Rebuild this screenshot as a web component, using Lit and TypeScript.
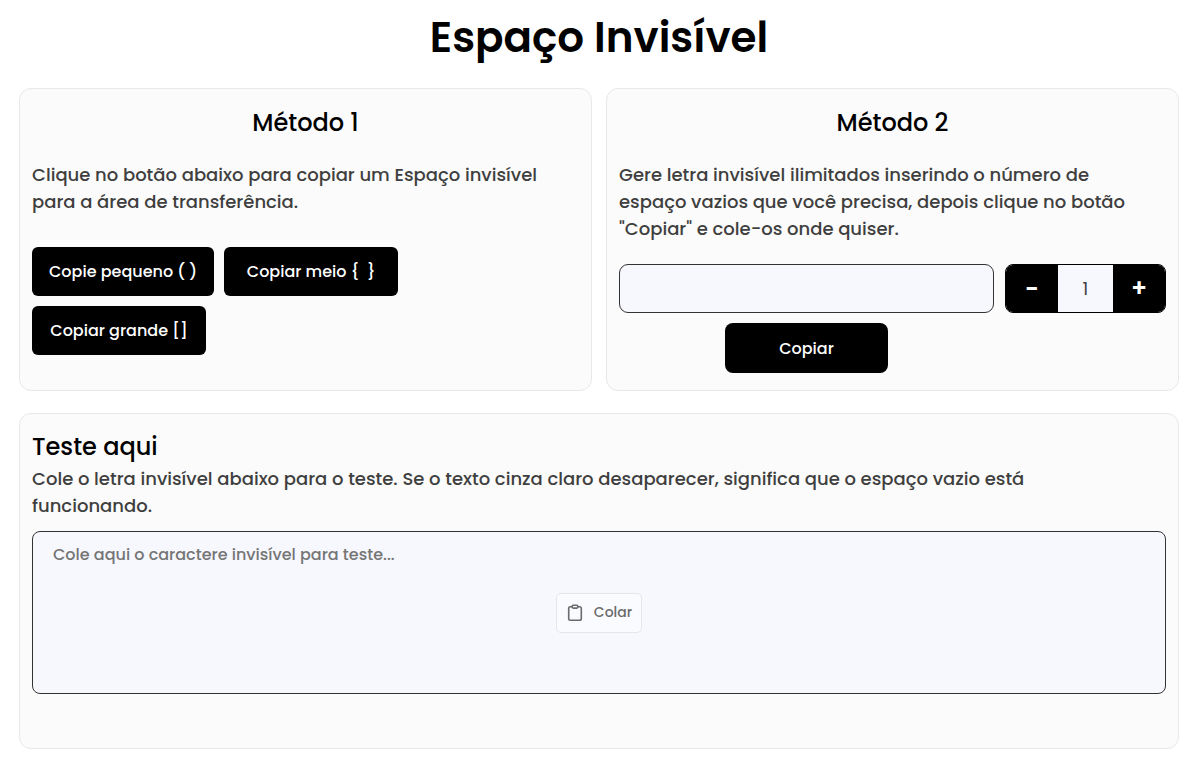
import { LitElement, html, css } from "lit";
import { customElement, state } from "lit/decorators.js";

const BLANK = "\u3164";

@customElement("app-root")
export class AppRoot extends LitElement {
  @state() private count = 1;
  @state() private output = "";

  static styles = css`
    :host {
      display: block;
      background: #fff;
      color: #3f3f3f;
      font-family: Poppins, Inter, "Noto Sans", sans-serif;
      font-weight: 500;
    }
    * {
      box-sizing: border-box;
    }
    .page {
      display: flex;
      flex-direction: column;
      padding: 8px 21px 21px 19px;
    }
    .title {
      margin: 0 0 20px;
      color: #000;
      font-size: 42px;
      line-height: 60px;
      font-weight: 600;
      text-align: center;
    }
    .methods {
      display: grid;
      grid-template-columns: 1fr 1fr;
      gap: 14px;
      margin-bottom: 22px;
    }
    .card {
      padding: 16px 12px 17px;
      border: 1px solid #e8e8e8;
      border-radius: 12px;
      background: #fbfbfb;
    }
    .heading {
      margin: 0;
      color: #000;
      font-size: 24px;
      line-height: 36px;
      font-weight: 500;
    }
    .centered {
      margin-bottom: 20px;
      text-align: center;
    }
    .text {
      margin: 0;
      padding-right: 24px;
      font-size: 18px;
      line-height: 27px;
    }
    .buttons {
      display: flex;
      flex-wrap: wrap;
      gap: 10px;
      margin-top: 32px;
    }
    button,
    input,
    textarea {
      margin: 0;
      font: inherit;
    }
    button {
      cursor: pointer;
    }
    .button {
      min-width: 174px;
      height: 49px;
      padding: 0 17px;
      border: 0;
      border-radius: 6px;
      background: #000;
      color: #fff;
      font-size: 16px;
      white-space: pre;
    }
    .generator {
      display: grid;
      grid-template-columns: 1fr 161px;
      gap: 10px 11px;
      margin-top: 22px;
    }
    .copy {
      justify-self: center;
      min-width: 163px;
      height: 50px;
      border-radius: 8px;
    }
    .field {
      width: 100%;
      height: 49px;
      padding: 0 14px;
      border: 1px solid #333;
      border-radius: 9px;
      background: #f7f8fe;
      color: #3f3f3f;
      font-size: 16px;
    }
    .stepper {
      display: flex;
      height: 49px;
      border: 1px solid #000;
      border-radius: 8px;
      overflow: hidden;
    }
    .step {
      width: 52px;
      padding: 0;
      border: 0;
      background: #000;
      color: #fff;
      font-size: 24px;
      line-height: 47px;
      font-weight: 600;
    }
    .count {
      flex: 1;
      min-width: 0;
      padding: 0;
      border: 0;
      background: #f7f8fe;
      color: #3f3f3f;
      font-size: 18px;
      font-weight: 400;
      text-align: center;
    }
    .test {
      padding: 15px 12px 54px;
    }
    .try {
      display: grid;
      margin-top: 12px;
    }
    .area {
      display: block;
      grid-area: 1 / 1;
      height: 163px;
      padding: 11px 20px;
      border-radius: 8px;
      line-height: 24px;
      resize: none;
    }
    .area::placeholder {
      color: #757575;
      opacity: 1;
    }
    .paste {
      display: flex;
      grid-area: 1 / 1;
      place-self: center;
      align-items: center;
      gap: 10px;
      height: 40px;
      padding: 0 9px;
      border: 1px solid #e6e6ea;
      border-radius: 5px;
      background: #fafbff;
      color: #6b6b6b;
      font-size: 14px;
    }
    .icon {
      display: block;
      fill: none;
      stroke: currentColor;
    }
  `;

  private copy(text: string) {
    navigator.clipboard?.writeText(text);
  }

  private step(by: number) {
    this.count = Math.max(1, this.count + by);
  }

  private generate() {
    this.output = BLANK.repeat(this.count);
    this.copy(this.output);
  }

  private async paste() {
    const area = this.renderRoot.querySelector("textarea");
    if (area) area.value = await navigator.clipboard.readText();
  }

  render() {
    return html`
      <main class="page">
        <h1 class="title">Espaço Invisível</h1>
        <div class="methods">
          <section class="card">
            <h2 class="heading centered">Método 1</h2>
            <p class="text">
              Clique no botão abaixo para copiar um Espaço invisível para a área
              de transferência.
            </p>
            <div class="buttons">
              <button class="button" @click=${() => this.copy(BLANK)}>Copie pequeno ( )</button>
              <button class="button" @click=${() => this.copy(BLANK.repeat(2))}>Copiar meio {  }</button>
              <button class="button" @click=${() => this.copy(BLANK.repeat(4))}>Copiar grande []</button>
            </div>
          </section>
          <section class="card">
            <h2 class="heading centered">Método 2</h2>
            <p class="text">
              Gere letra invisível ilimitados inserindo o número de espaço
              vazios que você precisa, depois clique no botão "Copiar" e
              cole-os onde quiser.
            </p>
            <div class="generator">
              <input class="field" type="text" aria-label="Espaço invisível" readonly .value=${this.output} />
              <div class="stepper">
                <button class="step" aria-label="Diminuir" @click=${() => this.step(-1)}>-</button>
                <input
                  class="count"
                  type="text"
                  inputmode="numeric"
                  aria-label="Número de espaços"
                  .value=${String(this.count)}
                  @change=${(e: Event) => {
                    this.count = Math.max(1, Number((e.target as HTMLInputElement).value) || 1);
                  }}
                />
                <button class="step" aria-label="Aumentar" @click=${() => this.step(1)}>+</button>
              </div>
              <button class="button copy" @click=${this.generate}>Copiar</button>
            </div>
          </section>
        </div>
        <section class="card test">
          <h2 class="heading" id="test-heading">Teste aqui</h2>
          <p class="text">
            Cole o letra invisível abaixo para o teste. Se o texto cinza claro
            desaparecer, significa que o espaço vazio está funcionando.
          </p>
          <div class="try">
            <textarea
              class="field area"
              aria-labelledby="test-heading"
              placeholder="Cole aqui o caractere invisível para teste..."
            ></textarea>
            <button class="paste" @click=${this.paste}>
              <svg class="icon" width="18" height="18" viewBox="0 0 18 18" stroke-width="1.6" stroke-linejoin="round">
                <path d="M6.2 2.8h-2a1.5 1.5 0 0 0-1.5 1.5v10.5a1.5 1.5 0 0 0 1.5 1.5h9.6a1.5 1.5 0 0 0 1.5-1.5V4.3a1.5 1.5 0 0 0-1.5-1.5h-2" />
                <rect x="6.2" y="1.3" width="5.6" height="2.8" rx="1" />
              </svg>
              Colar
            </button>
          </div>
        </section>
      </main>
    `;
  }
}
